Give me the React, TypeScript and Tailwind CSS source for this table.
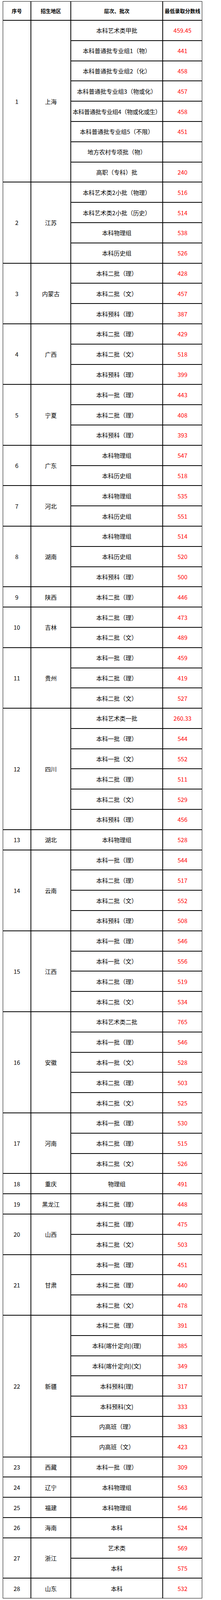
import React from 'react';

type Group = { region: string; rows: [string, string][] };

const GROUPS: Group[] = [
  {
    region: '上海',
    rows: [
      ['本科艺术类甲批', '459.45'],
      ['本科普通批专业组1（物）', '441'],
      ['本科普通批专业组2（化）', '458'],
      ['本科普通批专业组3（物或化）', '457'],
      ['本科普通批专业组4（物或化或生）', '458'],
      ['本科普通批专业组5（不限）', '451'],
      ['地方农村专项批（物）', ''],
      ['高职（专科）批', '240'],
    ],
  },
  {
    region: '江苏',
    rows: [
      ['本科艺术类2小批（物理）', '516'],
      ['本科艺术类2小批（历史）', '514'],
      ['本科物理组', '538'],
      ['本科历史组', '526'],
    ],
  },
  {
    region: '内蒙古',
    rows: [
      ['本科二批（理）', '428'],
      ['本科二批（文）', '457'],
      ['本科预科（理）', '387'],
    ],
  },
  {
    region: '广西',
    rows: [
      ['本科二批（理）', '429'],
      ['本科二批（文）', '518'],
      ['本科预科（理）', '399'],
    ],
  },
  {
    region: '宁夏',
    rows: [
      ['本科一批（理）', '443'],
      ['本科二批（理）', '408'],
      ['本科预科（理）', '393'],
    ],
  },
  {
    region: '广东',
    rows: [
      ['本科物理组', '547'],
      ['本科历史组', '518'],
    ],
  },
  {
    region: '河北',
    rows: [
      ['本科物理组', '535'],
      ['本科历史组', '551'],
    ],
  },
  {
    region: '湖南',
    rows: [
      ['本科物理组', '514'],
      ['本科历史组', '520'],
      ['本科预科（理）', '500'],
    ],
  },
  { region: '陕西', rows: [['本科二批（理）', '446']] },
  {
    region: '吉林',
    rows: [
      ['本科二批（理）', '473'],
      ['本科二批（文）', '489'],
    ],
  },
  {
    region: '贵州',
    rows: [
      ['本科一批（理）', '459'],
      ['本科二批（理）', '419'],
      ['本科二批（文）', '527'],
    ],
  },
  {
    region: '四川',
    rows: [
      ['本科艺术类一批', '260.33'],
      ['本科一批（理）', '544'],
      ['本科一批（文）', '552'],
      ['本科二批（理）', '511'],
      ['本科二批（文）', '529'],
      ['本科预科（理）', '456'],
    ],
  },
  { region: '湖北', rows: [['本科物理组', '528']] },
  {
    region: '云南',
    rows: [
      ['本科一批（理）', '544'],
      ['本科二批（理）', '517'],
      ['本科二批（文）', '552'],
      ['本科预科（理）', '508'],
    ],
  },
  {
    region: '江西',
    rows: [
      ['本科一批（理）', '546'],
      ['本科一批（文）', '556'],
      ['本科二批（理）', '519'],
      ['本科二批（文）', '534'],
    ],
  },
  {
    region: '安徽',
    rows: [
      ['本科艺术类二批', '765'],
      ['本科一批（理）', '546'],
      ['本科一批（文）', '528'],
      ['本科二批（理）', '503'],
      ['本科二批（文）', '525'],
    ],
  },
  {
    region: '河南',
    rows: [
      ['本科一批（理）', '530'],
      ['本科二批（理）', '515'],
      ['本科二批（文）', '526'],
    ],
  },
  { region: '重庆', rows: [['物理组', '491']] },
  { region: '黑龙江', rows: [['本科二批（理）', '448']] },
  {
    region: '山西',
    rows: [
      ['本科二批（理）', '475'],
      ['本科二批（文）', '503'],
    ],
  },
  {
    region: '甘肃',
    rows: [
      ['本科一批（理）', '451'],
      ['本科二批（理）', '440'],
      ['本科二批（文）', '478'],
    ],
  },
  {
    region: '新疆',
    rows: [
      ['本科二批（理）', '391'],
      ['本科(喀什定向)(理)', '385'],
      ['本科(喀什定向)(文)', '349'],
      ['本科预科(理)', '317'],
      ['本科预科(文)', '333'],
      ['内高班（理）', '383'],
      ['内高班（文）', '423'],
    ],
  },
  { region: '西藏', rows: [['本科一批（理）', '309']] },
  { region: '辽宁', rows: [['本科物理组', '563']] },
  { region: '福建', rows: [['本科物理组', '546']] },
  { region: '海南', rows: [['本科', '524']] },
  {
    region: '浙江',
    rows: [
      ['艺术类', '569'],
      ['本科', '575'],
    ],
  },
  { region: '山东', rows: [['本科', '532']] },
];

const cell = 'flex items-center justify-center bg-white whitespace-nowrap';

function Header() {
  return (
    <div className="grid h-[47px] grid-cols-[70px_100px_233px_99px] gap-[2px] text-[13px] font-bold">
      <div className={cell}>序号</div>
      <div className={cell}>招生地区</div>
      <div className={cell}>层次、批次</div>
      <div className={cell}>最低录取分数线</div>
    </div>
  );
}

function RegionGroup({ index, group }: { index: number; group: Group }) {
  return (
    <div className="grid grid-cols-[70px_100px_334px] gap-[2px]">
      <div className={cell}>{index}</div>
      <div className={cell}>{group.region}</div>
      <div className="flex flex-col gap-[2px]">
        {group.rows.map(([level, score], i) => (
          <div key={i} className="grid h-[49.8px] grid-cols-[233px_99px] gap-[2px]">
            <div className={`${cell} ${level.length > 14 ? 'tracking-[-0.5px]' : ''}`}>{level}</div>
            <div className={`${cell} text-[#ff0000]`}>{score}</div>
          </div>
        ))}
      </div>
    </div>
  );
}

export default function App() {
  return (
    <div
      className="w-[565px] bg-white pl-[7px] pt-[3px] text-black"
      style={{ fontFamily: '"Noto Sans CJK SC", "Noto Sans", sans-serif' }}
    >
      <div className="flex w-[510px] flex-col gap-[2px] bg-black p-[1px] text-[15px] leading-none">
        <Header />
        {GROUPS.map((g, i) => (
          <RegionGroup key={g.region} index={i + 1} group={g} />
        ))}
      </div>
    </div>
  );
}
